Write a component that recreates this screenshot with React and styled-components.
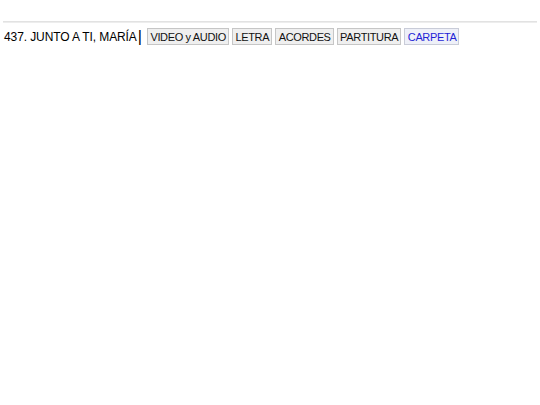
import React from 'react';
import styled, { createGlobalStyle } from 'styled-components';

const GlobalStyle = createGlobalStyle`
  html, body {
    margin: 0;
    padding: 0;
    background: #ffffff;
  }
  body {
    font-family: "Liberation Sans", Arial, sans-serif;
    color: #000;
  }
`;

const Page = styled.div`
  padding: 21px 3px 0 3px;
`;

const Rule = styled.div`
  height: 0;
  border-top: 1px solid #e2e2e2;
  border-bottom: 1px solid #ededed;
`;

const Row = styled.div`
  display: flex;
  align-items: center;
  padding: 5px 0 0 1px;
`;

const Title = styled.span`
  font-size: 12px;
  letter-spacing: -0.1px;
  white-space: nowrap;
`;

const Bar = styled.span`
  font-size: 16px;
  line-height: 1;
  margin: 0 5px 0 1px;
`;

const LinkButton = styled.span`
  display: inline-flex;
  align-items: center;
  height: 15px;
  padding: 0 2px 0 2.5px;
  margin-right: 3px;
  border: 1px solid ${({ active }) => (active ? '#c9ccd8' : '#c6c6c6')};
  background: ${({ active }) => (active ? '#eef0f8' : '#efefef')};
  color: ${({ active }) => (active ? '#1f1fd6' : '#111')};
  font-size: 11px;
  letter-spacing: -0.35px;
  white-space: nowrap;
`;

const links = ['VIDEO y AUDIO', 'LETRA', 'ACORDES', 'PARTITURA'];

export default function App() {
  return (
    <Page>
      <GlobalStyle />
      <Rule />
      <Row>
        <Title>437. JUNTO A TI, MARÍA</Title>
        <Bar>|</Bar>
        {links.map(label => (
          <LinkButton key={label}>{label}</LinkButton>
        ))}
        <LinkButton active>CARPETA</LinkButton>
      </Row>
    </Page>
  );
}
